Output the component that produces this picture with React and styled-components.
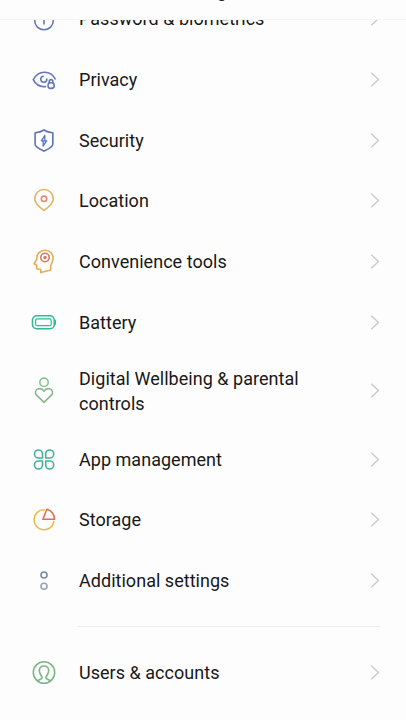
import React from 'react'
import styled, { createGlobalStyle } from 'styled-components'

const items = [
    { name: 'Password & biometrics', icon: <PasswordIcon />, height: 61 },
    { name: 'Privacy', icon: <PrivacyIcon />, height: 61 },
    { name: 'Security', icon: <SecurityIcon />, height: 61 },
    { name: 'Location', icon: <LocationIcon />, height: 60 },
    { name: 'Convenience tools', icon: <ToolsIcon />, height: 61 },
    { name: 'Battery', icon: <BatteryIcon />, height: 61 },
    { name: 'Digital Wellbeing & parental controls', icon: <WellbeingIcon />, height: 76 },
    { name: 'App management', icon: <AppsIcon />, height: 61 },
    { name: 'Storage', icon: <StorageIcon />, height: 60 },
    { name: 'Additional settings', icon: <AdditionalIcon />, height: 61 },
]

export default function App (){
    return(
        <Screen>
            <GlobalStyle />
            <Header>
                <Title>Settings</Title>
            </Header>
            <Content>
                <List>
                    {items.map((item) => (
                        <SettingsRow key={item.name} {...item} />
                    ))}
                    <Divider />
                    <SettingsRow name="Users & accounts" icon={<UsersIcon />} height={62} />
                </List>
            </Content>
        </Screen>
    )
}

function SettingsRow ({ name, icon, height }){
    return(
        <Row $height={height}>
            {icon}
            <Label>{name}</Label>
            <Chevron viewBox="0 0 10 16">
                <path d="M1.300 0.800L8.500 7.500L1.300 14.200" />
            </Chevron>
        </Row>
    )
}

function PasswordIcon (){
    return(
        <Icon viewBox="0 0 28 28" stroke="#6478b8">
            <circle cx="14" cy="15.5" r="9.3" />
            <path d="M14 14v5" />
        </Icon>
    )
}

function PrivacyIcon (){
    return(
        <Icon viewBox="0 0 28 28" stroke="#6577bb">
            <path d="M15.5 20.6C9.500 21.200 5.300 17.800 3.300 13.700C8.300 3.900 20.500 3.900 25.200 12.900" />
            <path d="M13.200 10.300A3 3 0 1 0 16.800 13" />
            <path d="M19.300 17v-1.600a1.800 1.800 0 0 1 3.600 0V17" />
            <rect x="18" y="16.800" width="6.200" height="5.600" rx="2.600" />
        </Icon>
    )
}

function SecurityIcon (){
    return(
        <Icon viewBox="0 0 28 28" stroke="#5c74b4">
            <path d="M14 3C16.500 4.800 19.500 5.500 22.800 5.700V17C22.800 20.500 17.500 22.500 14 24C10.500 22.500 5.100 20.500 5.100 17V5.700C8.500 5.500 11.500 4.800 14 3Z" />
            <path d="M14.800 8.500L11.300 13.800H16.700L13 19M14.800 8.500V13.500M13.200 14V19" stroke="#5670c8" strokeWidth="1.300" />
        </Icon>
    )
}

function LocationIcon (){
    return(
        <Icon viewBox="0 0 28 28" stroke="#e3b566">
            <path d="M14 23.500C10.500 21 4.700 16.900 4.700 11.800A9.300 9.300 0 0 1 23.300 11.800C23.300 16.900 17.500 21 14 23.500Z" />
            <circle cx="14" cy="11.800" r="2.700" stroke="#e08a70" />
        </Icon>
    )
}

function ToolsIcon (){
    return(
        <Icon viewBox="0 0 28 28" stroke="#e5ad5c">
            <path d="M10.800 24.600V21.300H8.200Q6.600 21.300 6.700 19.500V17.300L4 15.700L6.700 11.500C6.500 5.500 10.500 2.200 15 2.200C20 2.200 23 5.700 23 10.200C23 14.500 20.700 16.500 20.700 18.500V22Z" />
            <circle cx="15" cy="9.500" r="4.200" stroke="#d97858" />
            <circle cx="15" cy="9.500" r="0.900" stroke="#d97858" />
        </Icon>
    )
}

function BatteryIcon (){
    return(
        <Icon viewBox="0 0 28 28" stroke="#2dbb94">
            <rect x="2.500" y="6.800" width="21.800" height="13" rx="4.300" />
            <rect x="5.600" y="9.900" width="15.600" height="6.800" rx="1.800" strokeWidth="1.200" />
            <path d="M25.200 11.500v3.800" />
        </Icon>
    )
}

function WellbeingIcon (){
    return(
        <Icon viewBox="0 0 28 28" stroke="#88b691">
            <circle cx="14" cy="5.300" r="4.200" stroke="#83c58d" />
            <path d="M14 25.300L6.600 18.200C4.500 16 5.300 12.400 8.400 11.700C11 11.200 13 12.500 14 14.200C15 12.500 17 11.200 19.600 11.700C22.700 12.400 23.500 16 21.400 18.200Z" />
        </Icon>
    )
}

function AppsIcon (){
    return(
        <Icon viewBox="0 0 28 28" stroke="#40b498">
            <path d="M12.500 12H8.500A4 4 0 1 1 12.500 8Z" />
            <path d="M15.700 12H19.700A4 4 0 1 0 15.700 8Z" />
            <path d="M12.500 15H8.500A4 4 0 1 0 12.500 19Z" />
            <path d="M15.700 15H19.700A4 4 0 1 1 15.700 19Z" />
        </Icon>
    )
}

function StorageIcon (){
    return(
        <Icon viewBox="0 0 28 28" stroke="#e9bd43">
            <path d="M14.200 3.800A10 10 0 1 0 23.900 15.500" />
            <path d="M16.900 3.300L12.900 13.300H24.500C24.700 8.500 21.500 4.500 16.900 3.300Z" stroke="#dc7055" />
        </Icon>
    )
}

function AdditionalIcon (){
    return(
        <Icon viewBox="0 0 28 28" stroke="#7d879c">
            <circle cx="14" cy="8" r="3" />
            <circle cx="14" cy="19.300" r="3" stroke="#9da1b2" />
        </Icon>
    )
}

function UsersIcon (){
    return(
        <Icon viewBox="0 0 28 28" stroke="#7db688">
            <circle cx="14" cy="13.500" r="10.700" />
            <path d="M7.500 21.500C9.500 20.600 12 20.500 12 18.500C12 17 9.300 14.800 9.300 11.700C9.300 8.800 11.300 7 14 7C16.700 7 18.700 8.800 18.700 11.700C18.700 14.800 16 17 16 18.500C16 20.500 18.500 20.600 20.500 21.500" />
        </Icon>
    )
}

const GlobalStyle = createGlobalStyle`
    * {
        box-sizing: border-box;
    }
    body {
        margin: 0;
        background: #fdfdfd;
        font-family: Roboto, 'Liberation Sans', sans-serif;
    }
`

const Screen = styled.div`
    display: flex;
    flex-direction: column;
    height: 720px;
    overflow: hidden;
    background: #fdfdfd;
`

const Header = styled.header`
    display: flex;
    flex-shrink: 0;
    align-items: flex-end;
    justify-content: center;
    height: 20px;
    padding-bottom: 17px;
    border-bottom: 1px solid #f5f5f5;
    overflow: hidden;
`

const Title = styled.h1`
    margin: 0;
    font-size: 18px;
    font-weight: 500;
    line-height: 22px;
    color: #222;
`

const Content = styled.main`
    flex: 1;
    overflow: hidden;
`

const List = styled.div`
    margin-top: -32px;
`

const Row = styled.div`
    display: flex;
    align-items: center;
    height: ${(props) => props.$height}px;
    padding: 0 26px 0 30px;
`

const Icon = styled.svg`
    flex-shrink: 0;
    width: 28px;
    height: 28px;
    fill: none;
    stroke-width: 1.6;
    stroke-linecap: round;
    stroke-linejoin: round;
`

const Label = styled.span`
    flex: 1;
    padding: 1px 40px 0 21px;
    font-size: 18px;
    line-height: 24.5px;
    letter-spacing: 0.03px;
    color: #181818;
`

const Chevron = styled.svg`
    flex-shrink: 0;
    width: 10px;
    height: 16px;
    fill: none;
    stroke: #c6c6c6;
    stroke-width: 1.2;
`

const Divider = styled.hr`
    height: 1px;
    margin: 15px 26px 15px 77px;
    border: none;
    background: #ececec;
`
